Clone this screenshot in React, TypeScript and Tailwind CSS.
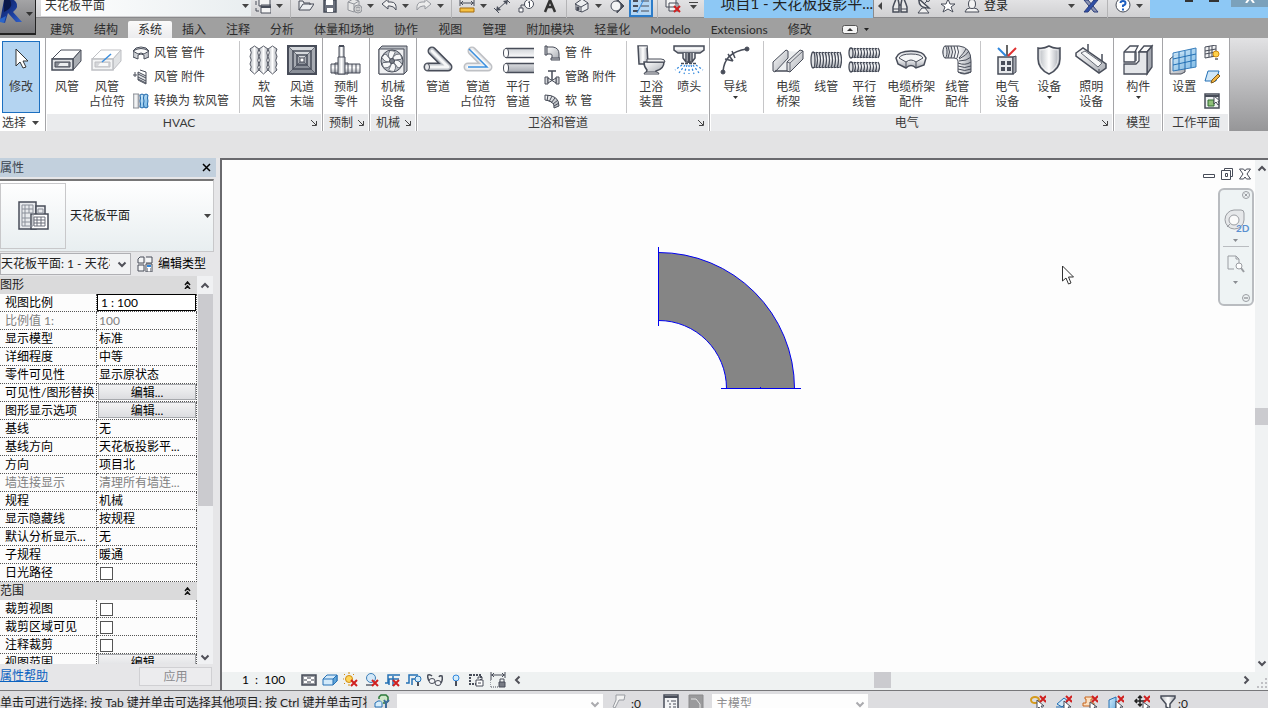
import { useState } from 'react'
import type { ReactNode } from 'react'

const INK = '#484d59'

interface IconProps {
  size?: number
  children: ReactNode
  className?: string
}

function Icon({ size = 16, children, className = '' }: IconProps) {
  return (
    <svg
      width={size}
      height={size}
      viewBox={`0 0 ${size} ${size}`}
      fill="none"
      stroke={INK}
      className={`shrink-0 ${className}`}
      aria-hidden="true"
    >
      {children}
    </svg>
  )
}

// Shared gradients, referenced by id from every icon
function Gradients() {
  return (
    <svg width="0" height="0" className="absolute" aria-hidden="true">
      <defs>
        <linearGradient id="steel" x1="0" y1="0" x2="1" y2="1">
          <stop offset="0" stopColor="#ffffff" />
          <stop offset="1" stopColor="#a9adb4" />
        </linearGradient>
        <linearGradient id="steelH" x1="0" y1="0" x2="1" y2="0">
          <stop offset="0" stopColor="#b4b8be" />
          <stop offset="0.5" stopColor="#ffffff" />
          <stop offset="1" stopColor="#a4a8b0" />
        </linearGradient>
        <linearGradient id="steelV" x1="0" y1="0" x2="0" y2="1">
          <stop offset="0" stopColor="#d0d3d8" />
          <stop offset="0.4" stopColor="#ffffff" />
          <stop offset="1" stopColor="#a4a8b0" />
        </linearGradient>
        <linearGradient id="glass" x1="0" y1="0" x2="1" y2="1">
          <stop offset="0" stopColor="#d6edfb" />
          <stop offset="1" stopColor="#6fb2e2" />
        </linearGradient>
        <linearGradient id="navy" x1="0" y1="0" x2="1" y2="1">
          <stop offset="0" stopColor="#0c1c5c" />
          <stop offset="0.6" stopColor="#1c3f9e" />
          <stop offset="1" stopColor="#2f62cf" />
        </linearGradient>
      </defs>
    </svg>
  )
}

function Arrow({ className = '' }: { className?: string }) {
  return (
    <svg width="7" height="4" viewBox="0 0 7 4" fill="#444" className={`shrink-0 ${className}`} aria-hidden="true">
      <path d="M0 0h7L3.5 4z" />
    </svg>
  )
}

function Chevron({ dir, color = '#505058' }: { dir: 'up' | 'down' | 'left' | 'right'; color?: string }) {
  const d = {
    up: 'M1.5 6.5 5 3l3.5 3.5',
    down: 'M1.5 3.5 5 7l3.5-3.5',
    left: 'M6.5 1.5 3 5l3.5 3.5',
    right: 'M3.5 1.5 7 5 3.5 8.5',
  }[dir]
  return (
    <svg width="10" height="10" viewBox="0 0 10 10" fill="none" stroke={color} strokeWidth="2" className="shrink-0" aria-hidden="true">
      <path d={d} />
    </svg>
  )
}

// A tube is a dark stroke with a lighter one on top
function Tube({ d, w }: { d: string; w: number }) {
  return (
    <g strokeLinecap="round" strokeLinejoin="round">
      <path d={d} strokeWidth={w} />
      <path d={d} stroke="#bfc3c9" strokeWidth={w - 3} />
      <path d={d} stroke="#f6f7f8" strokeWidth={w / 3} />
    </g>
  )
}

function Coil({ x, y, h, n }: { x: number; y: number; h: number; n: number }) {
  return (
    <g>
      <rect x={x} y={y} width={n * 3} height={h} rx="2" fill="url(#steelV)" stroke="none" />
      {Array.from({ length: n }, (_, i) => (
        <path
          key={i}
          d={`M${x + 2 + i * 3} ${y}q3 ${h / 2} 0 ${h}`}
          strokeWidth="1.3"
        />
      ))}
      <ellipse cx={x + 2} cy={y + h / 2} rx="2" ry={h / 2} fill="#dfe1e4" strokeWidth="1.3" />
      <path d={`M${x + 2} ${y + 0.5}h${n * 3 - 3}M${x + 2} ${y + h - 0.5}h${n * 3 - 3}`} strokeDasharray="2 1" />
    </g>
  )
}

function RedX({ x = 8, y = 8 }: { x?: number; y?: number }) {
  return <path d={`M${x} ${y}l6 6m0-6-6 6`} stroke="#d02020" strokeWidth="2" />
}

/* ---------- 32px ribbon icons ---------- */

const ductShape = (
  <>
    <path d="M1 15 10 6h20l-8 9z" fill="#fdfdfd" />
    <path d="m22 15 8-9v11l-8 9z" fill="#a9adb3" />
    <path d="M1 15h21v11H1z" fill="#dfe1e4" strokeWidth="1.5" />
    <path d="M4 18h15v5H4z" fill="#8a8e96" />
    <path d="m7 22 2-3h8v3z" fill="#eceef0" stroke="none" />
  </>
)

const pipeShape = 'M10 7 26 23H6'

const big: Record<string, ReactNode> = {
  cursor: <path d="M11 5v17l4-4 3 6 3-1-3-6h5z" fill="#fff" stroke="#333" />,
  duct: ductShape,
  ductGhost: (
    <>
      <g opacity="0.35">{ductShape}</g>
      <path d="m11 18 9-8" stroke="#3b8ede" strokeWidth="1.5" />
    </>
  ),
  flexDuct: (
    <>
      {[2, 11, 20].map((x) => (
        <path
          key={x}
          d={`M${x} 5l4.500-3 4.500 3q-2.500 4 0 7.500-2.500 4 0 7.500-2.500 4 0 6l-4.500 4-4.500-4q2.500-3 0-6 2.500-4 0-7.500 2.500-4 0-7.500z`}
          fill="url(#steelH)"
          strokeWidth="0.900"
        />
      ))}
    </>
  ),
  terminal: (
    <>
      <path d="M2 2h28v28H2z" fill="#a7abb2" />
      <path d="M2 2 16 16 30 2z" fill="#d5d8dc" stroke="none" />
      <path d="M2 30 16 16 30 30z" fill="#8a8f98" stroke="none" />
      <path d="M2 2h28v28H2z" strokeWidth="2" />
      <path d="M7 7h18v18H7zM11 11h10v10H11z" strokeWidth="1.500" />
      <path d="m2 2 28 28M30 2 2 30" strokeWidth="0.700" />
      <path d="M14 14h4v4h-4z" fill="#fff" />
    </>
  ),
  fabrication: (
    <>
      <path d="M1 20h29v9H1z" fill="url(#steelV)" />
      <path d="M9 2h5v12H9z" fill="url(#steelH)" />
      <path d="M5 19h13v11H5zM22 20v9M26 20v9" fill="none" />
      <path d="M8 13h7v17H8z" fill="url(#steelH)" />
      <path d="M9 2h5" strokeWidth="2" />
    </>
  ),
  fan: (
    <>
      <path d="m2 5 3-3h25v25l-3 3H2z" fill="#b8bcc2" />
      <path d="M2 5h25v25H2z" fill="#eff0f2" />
      <circle cx="15" cy="17" r="11" fill="#b9bdc4" />
      {[0, 60, 120, 180, 240, 300].map((a) => (
        <path key={a} d="M15 16q-6-3-2-9.500 5 0 5 2-2 4-3 7.500z" fill="#f6f7f8" transform={`rotate(${a} 15 17)`} strokeWidth="0.700" />
      ))}
      <circle cx="15" cy="17" r="2.500" fill="#777c86" />
    </>
  ),
  pipe: (
    <>
      <Tube d={pipeShape} w={9} />
      <ellipse cx="5" cy="23" rx="2.500" ry="3.500" fill="#e9eaec" />
    </>
  ),
  pipeGhost: (
    <>
      <g opacity="0.350">
        <Tube d={pipeShape} w={9} />
      </g>
      <path d="M7 5 25 23H6" stroke="#3b8ede" strokeWidth="1.500" />
    </>
  ),
  parallelPipe: (
    <>
      <path d="M4 4.500h28v9H4q-3-4.500 0-9zM4 19.500h28v9H4q-3-4.500 0-9z" fill="url(#steelV)" stroke="none" />
      <path d="M4 4.500h28M4 13.500h28M4 19.500h28M4 28.500h28" strokeWidth="1.500" />
      <ellipse cx="4" cy="9" rx="2.500" ry="4.500" fill="#fff" />
      <ellipse cx="4" cy="24" rx="2.500" ry="4.500" fill="#fff" />
    </>
  ),
  toilet: (
    <>
      <path d="M3 2h9l1 18H4z" fill="url(#steelH)" strokeWidth="1.500" />
      <path d="M4 3h8" stroke="#fff" />
      <path d="M9 18h20q0 7-8 9v2H11l1-3q-3-3-3-8z" fill="url(#steel)" strokeWidth="1.500" />
      <path d="M12 15h14q4 0 4 3H12z" fill="#f4f4f5" />
      <path d="M9 30h15q0-2-3-2h-9q-3 0-3 2z" fill="#f4f4f5" />
    </>
  ),
  sprinkler: (
    <>
      <path d="M1 2h30v4l-4 3H5L1 6z" fill="url(#steelV)" strokeWidth="1.500" />
      <path d="M10 9v5l3 4h6l3-4V9M13 9v8m6-8v8" fill="#e9ebed" strokeWidth="1.500" />
      <path d="M16 9v10" strokeWidth="3" />
      <path d="M8 19.500h16" strokeWidth="1.500" strokeDasharray="3 1" />
      <path
        d="m9 21-7 5m10-5-6 8m8-8-3 9m5-9v9m2-9 3 9m-1-9 6 8m-3-8 7 5"
        stroke="#2f86dd"
        strokeWidth="1.200"
        strokeDasharray="2 2"
      />
    </>
  ),
  wire: (
    <>
      <path d="M4 28Q5 8 28 5" strokeWidth="1.500" />
      <path d="m6 15 8 2M9 10l5 7M13 7l3 7" strokeWidth="1.500" />
      <circle cx="4" cy="28" r="2" fill={INK} />
      <circle cx="28" cy="5" r="2" fill={INK} />
    </>
  ),
  cableTray: (
    <>
      <path d="m3 27 12-20 14 1-12 19z" fill="#eceef0" stroke="none" />
      <path d="m1 18 13-12 2 1v7L3 28l-2-1z" fill="url(#steel)" />
      <path d="M3 27h13" strokeWidth="1.500" />
      <path d="m15 18 13-12 3 1v8L18 28l-3-1z" fill="url(#steel)" />
      <path d="m18 19 13-12M18 19v9m0-9-3-1" strokeWidth="0.800" />
    </>
  ),
  conduit: <Coil x={1} y={8} h={16} n={10} />,
  parallelConduit: (
    <>
      <Coil x={1} y={4} h={10} n={10} />
      <Coil x={1} y={18} h={10} n={10} />
    </>
  ),
  trayFitting: (
    <>
      <path d="M1 14q2-7 15-7t15 7l-2 7-8 3q-5-5-10 0l-8-4z" fill="url(#steelV)" strokeWidth="1.500" />
      <path d="M4 14q2-4 12-4t12 4l-7 4q-5-4-10 0z" fill="#f5f6f7" />
      <path d="M11 18v6m10-6v6" />
    </>
  ),
  conduitFitting: (
    <>
      <path d="M4 2h14q12 1 12 15v11q-7 4-13 0V17q0-3-4-3H4Q0 8 4 2z" fill="url(#steelH)" />
      {[0, 1, 2, 3, 4].map((i) => (
        <path key={i} d={`M${4 + i * 3} 2q3 6 0 12`} />
      ))}
      <ellipse cx="4" cy="8" rx="2" ry="6" fill="#e4e6e9" />
      <path d="M18 14q5-5 7-9M18 15q8-4 10-8M18 17q8 0 12-4M17 19q7 3 13-1M17 22q7 3 13 0M17 25q7 3 13 0M17 28q7 3 13 0" />
    </>
  ),
  elecPanel: (
    <>
      <path d="M7 13h15v17H7z" fill="#e6e8eb" strokeWidth="1.500" />
      <path d="m22 13 3-1v16l-3 2z" fill="#a4a8b0" />
      <path d="M10 17h4v4h-4zM16 17h4v4h-4zM10 23h4v4h-4zM16 23h4v4h-4z" fill={INK} stroke="none" />
      <path d="M16 12V1" strokeWidth="1.500" stroke="#333" />
      <path d="M15 12 7 4" strokeWidth="2" stroke="#2f86dd" />
      <path d="m17 12 8-8" strokeWidth="2" stroke="#e03030" />
    </>
  ),
  shield: (
    <>
      <path d="M5 4q6 1 11-2 5 3 11 2v11q0 10-11 15Q5 25 5 15z" fill="url(#steelH)" strokeWidth="1.500" />
      <path d="M7 6q5 0 9-2 4 2 9 2v9q0 8-9 13-9-5-9-13z" stroke="#fff" opacity="0.600" />
    </>
  ),
  light: (
    <>
      <path d="M13 0v8M27 10v8" strokeWidth="1.500" />
      <path d="m1 9 7-5 23 16v4l-7 5L1 12z" fill="url(#steel)" strokeWidth="1.500" />
      <path d="m6 9 4-2 17 12-4 4z" fill="#f6f7f8" strokeWidth="0.800" />
      <path d="M24 25v4" />
    </>
  ),
  component: (
    <>
      <path d="m2 8 6-6h8l-3 6v10H2z" fill="#fbfbfb" strokeWidth="1.300" />
      <path d="m17 8 5-6h8l-5 6z" fill="#fbfbfb" strokeWidth="1.300" />
      <path d="M25 8l5-6v21l-5 7z" fill="#a4a8b0" strokeWidth="1.300" />
      <path d="M2 20h12l3-3V8h8v22H2z" fill="#e4e6e9" strokeWidth="1.300" />
      <path d="M2 8h12v9" strokeWidth="1.300" />
    </>
  ),
  workPlane: (
    <>
      <path d="m2 15 5-4h10v17l-4 2H2z" fill="url(#steel)" />
      <path d="m5 9 23-5v19L5 27z" fill="url(#glass)" stroke="#2471b5" opacity="0.900" />
      <path d="M11 8v18M17 7v18M23 5v19M5 15l23-5M5 21l23-5" stroke="#2471b5" />
    </>
  ),
}

/* ---------- 16px icons ---------- */

const small: Record<string, ReactNode> = {
  ductFitting: (
    <>
      <path d="M0 6q2-4 8-4t8 4v6l-5 2v-4q-3-2-6 0v4l-5-2z" fill="url(#steelH)" />
      <path d="M0 6q8-5 16 0l-5 3q-3-2-6 0z" fill="#fafafa" />
    </>
  ),
  ductAccessory: (
    <>
      <path d="m5 3 8 4v8l-8-4z" fill="#e1e3e6" />
      <path d="m5 5 8 4M5 8l8 4M5 10l8 4M2 3v5M0 6h4M7 1l6 2v4" />
    </>
  ),
  convertFlex: (
    <>
      <path d="M0 1h6v14H0z" fill="url(#steelH)" stroke="#8a8e96" />
      <path d="M7 2q2-2 4 0 2-2 4 0-1 3 0 6-1 3 0 6-2 2-4 0-2 2-4 0 1-3 0-6 1-3 0-6z" fill="url(#glass)" stroke="#1f68ab" />
      <path d="M11 2q-1 3 0 6-1 3 0 6" stroke="#1f68ab" />
    </>
  ),
  pipeFitting: (
    <>
      <path d="M2 2h7q6 1 6 7v5H8v-4q0-1-2-1H2z" fill="url(#steel)" />
      <path d="M1 1h2v9H1zM7 13h9v2H7z" fill="#c8cbd0" />
    </>
  ),
  pipeAccessory: (
    <>
      <path d="M1 8h3v7H1zM12 8h3v7h-3z" fill="#d2d4d8" />
      <path d="m4 9 8 5V9l-8 5z" fill="#e9ebed" />
      <path d="M8 11V2M4 2h8" strokeWidth="1.500" />
    </>
  ),
  flexPipe: (
    <>
      <path d="M1 2q14 0 14 11l-5 2q1-7-9-8z" fill="url(#steel)" />
      <path d="M4 2 3 8M8 3 5 9m6-4-4 5m7-3-5 4m6-1-5 3" />
    </>
  ),
  planeShow: (
    <>
      <path d="m1 2 11-2v11L1 13zM5 1v11M8 1v11M1 6l11-2M1 9l11-2" fill="#f1f2f3" />
      <circle cx="12" cy="9" r="3" fill="#ffd24a" stroke="#d08a10" />
      <path d="M11 13h3v2h-3z" fill="#888" stroke="none" />
    </>
  ),
  refPlane: (
    <>
      <path d="M4 2h11l-3 10H1z" fill="#cfe6f7" stroke="#2471b5" />
      <path d="m7 14 1-3 6-6 2 2-6 6z" fill="#f2b544" stroke="#7c5a1c" />
    </>
  ),
  planeViewer: (
    <>
      <path d="M1 1h14v14H1z" fill="#eef0f2" strokeWidth="1.500" />
      <path d="M1 3h14" strokeWidth="2" />
      <path d="M4 7h6v6H4z" fill="#8fbf78" stroke="#2f6c2f" />
      <path d="M10 3v8l2-2 2 3 1-1-1-3h2z" fill="#fff" />
    </>
  ),
  switchWin: (
    <>
      <path d="M4 0h11v8H4zM6 7h10v8H6z" fill="#f4f4f4" />
      <path d="M6 9h10" strokeWidth="2" />
      <path d="M1 3v4m0 3v3h3" />
    </>
  ),
  open: <path d="M1 12V3h4l1 2h6v2M1 12l4-6h11l-4 6z" fill="#eceef0" />,
  save: (
    <>
      <path d="M2 2h12v12H2z" fill="#6b707c" strokeWidth="1.500" />
      <path d="M4 2h7v5H4zM5 10h6v4H5z" fill="#fff" stroke="none" />
    </>
  ),
  sync: (
    <g stroke="#92959b">
      <path d="m2 4 5-3 6 2v8l-5 3-6-2z" fill="#e6e6e6" />
      <path d="m2 4 6 2 5-3M8 6v8" />
      <circle cx="12" cy="11" r="4" fill="#cfcfcf" />
      <path d="M10 10q2-2 4 0m0 2q-2 2-4 0" />
    </g>
  ),
  undo: <path d="M1 6 7 1v3h3q6 0 5 8-2-4-6-4H7v3z" fill="#f0f0f0" />,
  redo: <path d="M15 6 9 1v3H6q-6 0-5 8 2-4 6-4h2v3z" fill="#ececec" stroke="#96999f" />,
  measure: (
    <>
      <path d="M1 5h14M1 2v6M15 2v6M4 3 2 5l2 2m8-4 2 2-2 2" />
      <path d="M1 10h14v4H1z" fill="#f5c042" stroke="#a46d10" />
    </>
  ),
  dimension: (
    <>
      <path d="M3 12 13 3M0 10l5 5M11 0l5 5" />
      <path d="m2 13 1-5 4 4zM14 2l-1 5-4-4z" fill={INK} stroke="none" />
    </>
  ),
  tag: (
    <>
      <circle cx="11" cy="6" r="4.500" fill="#fff" />
      <path d="M10 4.500 11.500 3.500V9M7 7H3v4" />
      <path d="M1 10h4v4H1z" fill="#fff" />
    </>
  ),
  textA: <path d="M3 14 8 2l5 12M5 9h6" stroke="#333" strokeWidth="2.500" />,
  house: (
    <>
      <path d="M2 6v6l6 2 6-3V5L8 1 1 6l6 3 7-4M7 9v5" fill="#eceef0" />
      <path d="M3 9h2v3H3z" fill={INK} />
    </>
  ),
  section: (
    <>
      <path d="M8 1v14l7-7z" fill={INK} />
      <circle cx="7" cy="8" r="5" fill="#f4f4f4" />
    </>
  ),
  thinLines: (
    <>
      <path d="M0 3h5M0 8h5M0 13h5" strokeWidth="2" />
      <path d="M8 3h8M8 8h8M8 13h8" />
      <path d="m4 15 7-14" stroke="#2f86dd" />
    </>
  ),
  closeHidden: (
    <>
      <path d="M1 1h10v8H1zM4 5h9v8H4z" fill="#f4f4f4" />
      <RedX x={9} y={8} />
    </>
  ),
  binoculars: (
    <>
      <path d="M2 6 4 1h2l1 5v8H1V9zM14 6l-2-5h-2L9 6v8h6V9zM7 7h2" fill="#e8e8e8" strokeWidth="1.500" />
      <path d="M1 11h6m2 0h6" />
    </>
  ),
  satellite: (
    <>
      <path d="M3 1q-1 9 10 9z" fill="#f0f0f0" strokeWidth="1.500" />
      <path d="m8 6 4-4M2 15h11l-4-5H6z" fill="#f0f0f0" />
      <circle cx="12" cy="2" r="1.500" fill="#f0f0f0" />
    </>
  ),
  star: <path d="m8 1 2 5h5l-4 3 2 5-5-3-5 3 2-5-4-3h5z" fill="#fff" />,
  person: (
    <>
      <path d="M1 14q1-4 5-4h4q4 0 5 4z" fill="#f4f4f4" />
      <ellipse cx="8" cy="6" rx="3.500" ry="4.500" fill="#f4f4f4" />
    </>
  ),
  exchange: (
    <>
      <path d="M1 2h4l10 12h-4z" fill="#8b93b0" stroke="#2b3c7c" />
      <path d="M15 2h-4L1 14h4z" fill="#2e4fa8" stroke="#2b3c7c" />
    </>
  ),
  help: (
    <>
      <circle cx="8" cy="7" r="7" fill="#fff" />
      <path d="M5.500 5q0-2 2.500-2t2.500 2T8 7.500V9M8 10.500v2" stroke="#1f5fc0" strokeWidth="2" />
    </>
  ),
  editType: (
    <>
      <path d="m1 3 2-2h4v6H1zM9 1h6v6H9M1 9h6v6H1z" fill="#f4f5f6" />
      <path d="M9 8h6v8H9z" fill="#fff" />
      <path d="M10 9h4v2h-4z" fill="#2f86dd" stroke="none" />
      <path d="M10 13h1m2 0h1m-4 2h1m2 0h1" />
    </>
  ),
  detail: (
    <>
      <path d="M1 3h14v10H1z" fill="#9a9da3" strokeWidth="1.500" />
      <path d="M3 5h3v2H3zM10 5h3v2h-3zM6 7h4v2H6zM3 9h3v2H3zM10 9h3v2h-3z" fill="#fff" stroke="none" />
    </>
  ),
  visualStyle: (
    <>
      <path d="m1 7 4-4h10v6l-4 4H1z" fill="#d3eafa" stroke="#2471b5" />
      <path d="m11 7 4-4v6l-4 4z" fill="#5fa4d8" stroke="#2471b5" />
      <path d="M1 7h10" stroke="#2471b5" />
    </>
  ),
  sunPath: (
    <>
      <circle cx="6" cy="7" r="3.500" fill="#ffd65a" stroke="#cf8a10" />
      <path d="M6 0v2M6 12v2M0 7h1M1 2l1 1m8 0 1-1M1 12l1-1" stroke="#cf8a10" />
      <RedX />
    </>
  ),
  shadow: (
    <>
      <circle cx="7" cy="6" r="4.500" fill="#d3e8f8" stroke="#3d7fb8" />
      <path d="M2 13h7" strokeWidth="2" stroke="#7f868f" />
      <RedX />
    </>
  ),
  crop: (
    <>
      <path d="M0 11h3V3h12M4 13V7h10M8 4v10" stroke="#2471b5" strokeWidth="1.500" />
      <RedX />
    </>
  ),
  cropShow: (
    <>
      <path d="M0 11h3V3h9M6 13V7h4" stroke="#2471b5" strokeWidth="1.500" />
      <circle cx="12" cy="7" r="3" fill="#d3ecfb" stroke="#2471b5" />
      <path d="M12 10v4" strokeWidth="2" />
    </>
  ),
  glasses: (
    <>
      <ellipse cx="5" cy="9" rx="3" ry="2.500" fill="#f4f6f8" />
      <ellipse cx="11" cy="11" rx="3" ry="2.500" fill="#f4f6f8" />
      <path d="M2 9Q0 5 1 3q2-1 4 1M14 11q2-3 1-7-2-1-3 1" strokeWidth="1.500" />
    </>
  ),
  bulb: (
    <>
      <circle cx="8" cy="6" r="3" fill="#d3ecfb" stroke="#2f86dd" />
      <path d="M8 9v5" strokeWidth="2" />
    </>
  ),
  tempView: (
    <>
      <path d="M1 3h11v9H1z" strokeWidth="2" strokeDasharray="2 1" />
      <path d="M7 8h7v6H7z" fill="#fff" />
      <path d="M9 7V5h4v2m-4 4h3" />
    </>
  ),
  constraints: (
    <>
      <path d="M1 0v8M15 0v6M1 3h14M4 1 2 3l2 2m8-4 2 2-2 2" />
      <path d="M0 8v7h9" strokeDasharray="1 1" />
      <path d="M9 10h6v5H9z" fill="#777b84" />
      <path d="M10 10V7h4v3" />
    </>
  ),
  worksets: (
    <>
      <path d="m1 9 3-2h4v6H1z" fill="#d6ecfa" stroke="#2471b5" />
      <path d="M5 5V3l2-2h5l2 2v4l-2 2H9" fill="#cfe7c8" stroke="#2c7a3a" strokeWidth="1.500" />
      <path d="M12 8v7m-2-9 2 3 3-3" stroke="#3c6c9c" strokeWidth="2" />
    </>
  ),
  pushPin: <path d="M5 1h9l-1 5H8l-4 8-2-1 3-7z" fill="#f2f2f2" stroke="#999ca2" />,
  optionList: (
    <>
      <path d="M1 1h14v14H1z" fill="#f2f3f5" strokeWidth="1.500" />
      <path d="M1 3h14" strokeWidth="2" />
      <path d="M4 7h2m2 0h5M6 10h2m2 0h3M6 13h2m2 0h3" />
    </>
  ),
  excludeOption: (
    <>
      <path d="M1 1h14v14H1z" fill="#9a9a9c" stroke="#8a8a8c" />
      <path d="M3 5h5l4 5v4" stroke="#e5e5e5" />
    </>
  ),
  selLinks: (
    <>
      <ellipse cx="5" cy="5" rx="4" ry="3" stroke="#d59a1c" strokeWidth="2" />
      <path d="M7 5v9l2-2 2 3 2-1-2-3h3z" fill="#fff" />
      <RedX x={10} y={1} />
    </>
  ),
  selUnderlay: (
    <>
      <path d="m1 9 7-6 4 3-6 6zM0 12h9" fill="#cfe6f7" stroke="#2471b5" />
      <path d="M8 6v9l2-2 2 3 2-1-2-3h3z" fill="#fff" />
      <RedX x={10} y={1} />
    </>
  ),
  selPinned: (
    <>
      <path d="M3 2h8v2H9v4h3v3H1V8h3V4H3z" fill="#fbe0c2" stroke="#c8641c" />
      <path d="M8 7v8l2-2 2 3 2-1-2-3h3z" fill="#fff" />
      <RedX x={10} y={1} />
    </>
  ),
  selFace: (
    <>
      <path d="m1 5 7-3v11l-7 2z" fill="url(#glass)" stroke="#2471b5" />
      <path d="M8 6v9l2-2 2 3 2-1-2-3h3z" fill="#fff" />
      <RedX x={10} y={1} />
    </>
  ),
  dragSel: (
    <>
      <path d="M6 1v10M1 6h10M4 3l2-2 2 2M4 9l2 2 2-2M3 4 1 6l2 2" stroke="#222" strokeWidth="1.500" />
      <path d="M9 7v8l2-2 2 3 1-1-1-3h3z" fill="#fff" />
      <RedX x={10} y={1} />
    </>
  ),
  filter: <path d="M1 2h14v2l-5 6v5l-4-2v-3L1 4z" fill="url(#steelH)" strokeWidth="1.500" />,
}

/* ---------- Title bar ---------- */

function QatButton({ name, label }: { name: string; label: string }) {
  return (
    <button type="button" aria-label={label} className="mx-1 shrink-0">
      <Icon>{small[name]}</Icon>
    </button>
  )
}

function QatArrow() {
  return <Arrow className="mr-[3px] ml-px" />
}

function QatSeparator() {
  return <span className="mr-[3px] ml-1 h-6 w-px shrink-0 bg-[#b4b4b6]" />
}

function TitleBar() {
  return (
    <div className="flex h-[18px] overflow-hidden bg-[#8dc8f5]">
      <div className="flex shrink-0 items-center border-b border-[#8a8a8c] bg-gradient-to-b from-[#e2e2e4] to-[#d0d0d2] pr-1.5 pb-[6px] pl-[5px]">
        <div className="relative flex h-5 w-[210px] items-center bg-gradient-to-r from-white to-[#e9eef0]">
          <select aria-label="当前视图" className="h-5 w-full appearance-none px-1 text-[12px] leading-5 text-[#333]">
            <option>天花板平面</option>
          </select>
          <Arrow className="pointer-events-none absolute right-0.5" />
        </div>
        <QatButton name="switchWin" label="切换窗口" />
        <QatArrow />
        <QatSeparator />
        <QatButton name="open" label="打开" />
        <QatButton name="save" label="保存" />
        <QatButton name="sync" label="同步" />
        <QatArrow />
        <QatButton name="undo" label="放弃" />
        <QatArrow />
        <QatButton name="redo" label="重做" />
        <QatArrow />
        <QatSeparator />
        <QatButton name="measure" label="测量" />
        <QatArrow />
        <QatButton name="dimension" label="对齐尺寸标注" />
        <QatButton name="tag" label="按类别标记" />
        <QatButton name="textA" label="文字" />
        <QatSeparator />
        <QatButton name="house" label="默认三维视图" />
        <QatArrow />
        <QatButton name="section" label="剖面" />
        <button
          type="button"
          aria-label="细线"
          aria-pressed="true"
          className="flex h-[22px] w-6 shrink-0 items-center justify-center border-2 border-[#2c7cc9] bg-[#b4d6f3]"
        >
          <Icon>{small.thinLines}</Icon>
        </button>
        <QatSeparator />
        <QatButton name="closeHidden" label="关闭隐藏窗口" />
        <button type="button" aria-label="自定义快速访问工具栏" className="ml-1">
          <svg width="9" height="7" viewBox="0 0 9 7" fill="#444" aria-hidden="true">
            <path d="M0 0h9v1H0zM1 3h7L4.500 7z" />
          </svg>
        </button>
      </div>

      <div className="flex min-w-0 flex-1 items-center justify-end pb-3">
        <h1 className="truncate text-[15px] leading-5 text-[#222]">项目1 - 天花板投影平...</h1>
      </div>

      {/* Info center */}
      <div className="flex shrink-0 items-center border-b border-l border-[#8a8a8c] bg-gradient-to-b from-[#e2e2e4] to-[#d0d0d2] pr-1 pb-[6px] pl-1">
        <svg width="4" height="8" viewBox="0 0 4 8" fill="#444" className="mr-1.5" aria-hidden="true">
          <path d="M4 0v8L0 4z" />
        </svg>
        <QatButton name="binoculars" label="搜索" />
        <QatButton name="satellite" label="通讯中心" />
        <QatButton name="star" label="收藏夹" />
        <button type="button" className="ml-1 flex items-center gap-1 text-[12px] leading-4 text-[#222]">
          <Icon>{small.person}</Icon>
          登录
        </button>
        <Arrow className="mr-1 ml-[60px]" />
        <QatButton name="exchange" label="应用程序" />
        <QatSeparator />
        <QatButton name="help" label="帮助" />
        <QatArrow />
      </div>

      {/* Window buttons */}
      <div className="flex w-[118px] shrink-0 justify-end">
        <button type="button" aria-label="最小化" className="mr-4 h-[2px] w-2 bg-[#333]" />
        <button type="button" aria-label="还原" className="mr-3 h-[2px] w-2.5 bg-[#333]" />
        <button type="button" aria-label="关闭" className="flex h-[7px] w-[37px] justify-center bg-[#7ba1bb]">
          <svg width="10" height="3" viewBox="0 0 10 3" stroke="#fff" strokeWidth="2" aria-hidden="true">
            <path d="m1 3 3-4m2 0 3 4" />
          </svg>
        </button>
      </div>
    </div>
  )
}

const tabs = [
  '建筑', '结构', '系统', '插入', '注释', '分析', '体量和场地', '协作', '视图', '管理',
  '附加模块', '轻量化', 'Modelo', 'Extensions', '修改',
]

function Header() {
  const [active, setActive] = useState('系统')
  return (
    <header className="flex bg-[#a0a0a0]">
      <button
        type="button"
        aria-label="应用程序菜单"
        className="flex h-[35px] w-9 shrink-0 border-r border-b-2 border-[#222] bg-gradient-to-b from-[#a4a4a6] to-[#77777a]"
      >
        <svg width="35" height="33" viewBox="0 0 35 33" aria-hidden="true">
          <path d="M4 0h10q5 4 2 9l-3 3 9 10h-6L8 13 5 23l-5-2z" fill="url(#navy)" />
          <path d="M4 0h6q3 5-1 9l-5 3z" fill="#0b184a" />
          <path d="m0 19 6-3-2 7-4-1z" fill="#2b66c9" />
          <path d="M26 12h7l-3.500 4z" fill="#333" />
        </svg>
      </button>
      <div className="flex min-w-0 flex-1 flex-col">
        <TitleBar />
        <nav className="flex h-5 items-end pl-1 text-[12px] text-[#2c2c2c]">
          {tabs.map((tab) => (
            <button
              key={tab}
              type="button"
              onClick={() => setActive(tab)}
              className={`h-[17px] px-2.5 leading-[17px] whitespace-nowrap ${
                active === tab ? 'rounded-t-xs bg-gradient-to-b from-[#fafafa] to-[#ececee]' : ''
              }`}
            >
              {tab}
            </button>
          ))}
          <button type="button" aria-label="最小化功能区" className="ml-5 flex h-[17px] items-center gap-1.5">
            <svg width="16" height="9" viewBox="0 0 16 9" aria-hidden="true">
              <rect x="0.500" y="0.500" width="15" height="8" rx="2" fill="#f4f4f4" stroke="#555" />
              <path d="M5 6h6L8 3z" fill="#333" />
            </svg>
            <svg width="5" height="3" viewBox="0 0 5 3" fill="#222" aria-hidden="true">
              <path d="M0 0h5L2.500 3z" />
            </svg>
          </button>
        </nav>
      </div>
    </header>
  )
}

/* ---------- Ribbon ---------- */

interface ToolProps {
  icon: string
  label: string
  width?: string
  menu?: boolean
}

function Tool({ icon, label, width = 'w-[38px]', menu = false }: ToolProps) {
  return (
    <button type="button" className={`flex shrink-0 flex-col items-center pt-1.5 ${width}`}>
      <Icon size={32}>{big[icon]}</Icon>
      <span className="mt-[3px] text-center leading-[15px] whitespace-pre">{label}</span>
      {menu && (
        <svg width="5" height="3" viewBox="0 0 5 3" fill="#333" className="mt-0.5" aria-hidden="true">
          <path d="M0 0h5L2.500 3z" />
        </svg>
      )}
    </button>
  )
}

function ToolList({ items }: { items: [string, string][] }) {
  return (
    <div className="flex shrink-0 flex-col pt-[3px] pr-2.5 pl-1.5">
      {items.map(([icon, label]) => (
        <button key={label} type="button" className="flex h-6 items-center gap-[5px] whitespace-nowrap">
          <Icon>{small[icon]}</Icon>
          {label}
        </button>
      ))}
    </div>
  )
}

function Divider() {
  return <span className="mx-[5px] mt-[3px] h-[72px] w-px shrink-0 bg-[#c6c6c8]" />
}

interface PanelProps {
  title: string
  launcher?: boolean
  children: ReactNode
}

function Panel({ title, launcher = false, children }: PanelProps) {
  return (
    <section className="flex shrink-0 flex-col border-r border-[#a5a5a8] bg-white px-px">
      <div className="flex h-[76px]">{children}</div>
      <div className="flex h-[17px] items-center bg-[#eaebed]">
        <h2 className="flex-1 text-center leading-4">{title}</h2>
        {launcher && (
          <button type="button" aria-label={`${title}设置`} className="mr-1">
            <svg width="6" height="6" viewBox="0 0 6 6" fill="none" stroke="#444" aria-hidden="true">
              <path d="m0 0 5 5M5.500 1v4.500H1" />
            </svg>
          </button>
        )}
      </div>
    </section>
  )
}

function Ribbon() {
  return (
    <div className="flex h-[93px] shrink-0 overflow-hidden bg-gradient-to-b from-[#e2e2e4] to-[#969698] text-[12px] text-[#3a3a3a]">
      <section className="flex shrink-0 flex-col border-r border-[#a5a5a8] bg-white pr-[5px] pl-0.5">
        <div className="flex h-[76px] pt-[3px]">
          <button
            type="button"
            className="flex h-[72px] w-[38px] flex-col items-center border border-[#1c6fc0] bg-[#b4d4f1] pt-0.5"
          >
            <Icon size={32}>{big.cursor}</Icon>
            <span className="mt-[3px] leading-[15px]">修改</span>
          </button>
        </div>
        <button type="button" className="flex h-[17px] items-center gap-1.5 leading-4">
          选择 <Arrow />
        </button>
      </section>

      <Panel title="HVAC" launcher>
        <Tool icon="duct" label="风管" width="w-10" />
        <Tool icon="ductGhost" label={'风管\n占位符'} width="w-10" />
        <ToolList
          items={[
            ['ductFitting', '风管 管件'],
            ['ductAccessory', '风管 附件'],
            ['convertFlex', '转换为 软风管'],
          ]}
        />
        <span className="mt-[3px] mr-[5px] h-[72px] w-px shrink-0 bg-[#c6c6c8]" />
        <Tool icon="flexDuct" label={'软\n风管'} />
        <Tool icon="terminal" label={'风道\n末端'} />
      </Panel>

      <Panel title="预制" launcher>
        <div className="px-[3px]">
          <Tool icon="fabrication" label={'预制\n零件'} />
        </div>
      </Panel>

      <Panel title="机械" launcher>
        <div className="px-[3px]">
          <Tool icon="fan" label={'机械\n设备'} />
        </div>
      </Panel>

      <Panel title="卫浴和管道" launcher>
        <Tool icon="pipe" label="管道" width="w-10" />
        <Tool icon="pipeGhost" label={'管道\n占位符'} width="w-10" />
        <Tool icon="parallelPipe" label={'平行\n管道'} width="w-10" />
        <ToolList
          items={[
            ['pipeFitting', '管 件'],
            ['pipeAccessory', '管路 附件'],
            ['flexPipe', '软 管'],
          ]}
        />
        <span className="mt-[3px] mr-[5px] h-[72px] w-px shrink-0 bg-[#c6c6c8]" />
        <Tool icon="toilet" label={'卫浴\n装置'} />
        <Tool icon="sprinkler" label="喷头" />
      </Panel>

      <Panel title="电气" launcher>
        <div className="flex pr-1 pl-[5px]">
          <Tool icon="wire" label="导线" menu />
        </div>
        <Divider />
        <Tool icon="cableTray" label={'电缆\n桥架'} />
        <Tool icon="conduit" label="线管" />
        <Tool icon="parallelConduit" label={'平行\n线管'} />
        <Tool icon="trayFitting" label={'电缆桥架\n配件'} width="w-14" />
        <Tool icon="conduitFitting" label={'线管\n配件'} width="w-[36px]" />
        <Divider />
        <Tool icon="elecPanel" label={'电气\n设备'} width="w-[42px]" />
        <Tool icon="shield" label="设备" width="w-[42px]" menu />
        <Tool icon="light" label={'照明\n设备'} width="w-[42px]" />
      </Panel>

      <Panel title="模型">
        <div className="px-1">
          <Tool icon="component" label="构件" menu />
        </div>
      </Panel>

      <Panel title="工作平面">
        <Tool icon="workPlane" label="设置" width="w-10" />
        <div className="flex flex-col gap-2 pt-[7px] pr-2">
          <button type="button" aria-label="显示">
            <Icon>{small.planeShow}</Icon>
          </button>
          <button type="button" aria-label="参照平面">
            <Icon>{small.refPlane}</Icon>
          </button>
          <button type="button" aria-label="查看器">
            <Icon>{small.planeViewer}</Icon>
          </button>
        </div>
      </Panel>
    </div>
  )
}

/* ---------- Properties palette ---------- */

type Kind = 'text' | 'input' | 'button' | 'check' | 'disabled'

interface Prop {
  name: string
  value?: string
  kind?: Kind
}

const groups: { title: string; props: Prop[] }[] = [
  {
    title: '图形',
    props: [
      { name: '视图比例', value: '1 : 100', kind: 'input' },
      { name: '比例值 1:', value: '100', kind: 'disabled' },
      { name: '显示模型', value: '标准' },
      { name: '详细程度', value: '中等' },
      { name: '零件可见性', value: '显示原状态' },
      { name: '可见性/图形替换', value: '编辑...', kind: 'button' },
      { name: '图形显示选项', value: '编辑...', kind: 'button' },
      { name: '基线', value: '无' },
      { name: '基线方向', value: '天花板投影平...' },
      { name: '方向', value: '项目北' },
      { name: '墙连接显示', value: '清理所有墙连...', kind: 'disabled' },
      { name: '规程', value: '机械' },
      { name: '显示隐藏线', value: '按规程' },
      { name: '默认分析显示...', value: '无' },
      { name: '子规程', value: '暖通' },
      { name: '日光路径', kind: 'check' },
    ],
  },
  {
    title: '范围',
    props: [
      { name: '裁剪视图', kind: 'check' },
      { name: '裁剪区域可见', kind: 'check' },
      { name: '注释裁剪', kind: 'check' },
      { name: '视图范围', value: '编辑...', kind: 'button' },
    ],
  },
]

function PropValue({ prop }: { prop: Prop }) {
  switch (prop.kind) {
    case 'input':
      return (
        <input
          id={prop.name}
          defaultValue={prop.value}
          className="block h-[17px] w-full border border-black bg-white px-[3px] leading-[15px] outline-none"
        />
      )
    case 'button':
      return (
        <button
          type="button"
          id={prop.name}
          className="mx-px block h-[16px] w-[98px] border border-[#a6a8ac] bg-gradient-to-b from-[#f3f3f4] to-[#dcdde0] leading-[15px]"
        >
          {prop.value}
        </button>
      )
    case 'check':
      return (
        <input
          type="checkbox"
          id={prop.name}
          className="mt-[3px] ml-[3px] block h-[13px] w-[13px] appearance-none border border-[#555] bg-white checked:bg-[#555]"
        />
      )
    default:
      return <span className="block truncate pl-0.5">{prop.value}</span>
  }
}

function PropertyTable() {
  return (
    <table className="w-full table-fixed border-separate border-spacing-0 text-[12px]">
      <colgroup>
        <col className="w-[97px]" />
        <col />
      </colgroup>
      {groups.map((group) => (
        <tbody key={group.title}>
          <tr>
            <th colSpan={2} className="h-[18px] bg-[#dadadb] p-0 text-left leading-[18px] font-normal">
              <span className="flex items-center justify-between pr-1.5">
                {group.title}
                <svg width="7" height="8" viewBox="0 0 7 8" fill="none" stroke="#111" strokeWidth="1.500" aria-hidden="true">
                  <path d="m1 4 2.500-3L6 4M1 8l2.500-3L6 8" />
                </svg>
              </span>
            </th>
          </tr>
          {group.props.map((prop) => (
            <tr key={prop.name} className={prop.kind === 'disabled' ? 'text-[#808080]' : 'text-black'}>
              <td className="h-[18px] border-r border-b border-dotted border-[#555] p-0 pl-[5px] align-top leading-[17px] whitespace-nowrap">
                <label htmlFor={prop.name}>{prop.name}</label>
              </td>
              <td className="h-[18px] border-r border-b border-dotted border-[#555] p-0 align-top leading-[17px]">
                <PropValue prop={prop} />
              </td>
            </tr>
          ))}
        </tbody>
      ))}
    </table>
  )
}

function PropertiesPalette() {
  return (
    <aside className="mr-1 flex w-[216px] shrink-0 flex-col text-[12px] text-[#222]">
      <div className="mb-[2px] flex h-[19px] shrink-0 items-center justify-between bg-[#c2d0dd] pr-[5px]">
        <h2 className="leading-[18px] text-[#3a4450]">属性</h2>
        <button type="button" aria-label="关闭属性">
          <svg width="9" height="9" viewBox="0 0 9 9" stroke="#000" strokeWidth="1.500" aria-hidden="true">
            <path d="m1 1 7 7m0-7L1 8" />
          </svg>
        </button>
      </div>

      {/* Type selector */}
      <div className="mr-0.5 flex h-[73px] shrink-0 items-center border-t-2 border-r border-b border-t-[#777] border-r-[#c8c8ca] border-b-[#c8c8ca] bg-gradient-to-b from-white to-[#e8eef0] pr-0.5">
        <div className="flex h-[66px] w-[66px] shrink-0 items-center justify-center border border-[#c8c8ca]">
          <Icon size={32}>
            <g strokeWidth="1.500">
              <path d="M2 2h17v27H2z" fill="#e8eaed" />
              <path d="M19 6h9v20h-9z" fill="#e8eaed" />
              <path d="M14 14h17v15H14z" fill="#fff" />
            </g>
            <path d="M5 5h11v21H5zM8 5v21M12 5v8M5 9h11M5 13h11M5 18h8M5 22h8M21 9h5v4h-5z" stroke="#8b909a" />
            <path d="M17 17h11v9H17zM20 17v9M24 17v9M17 20h11M17 23h11" stroke="#6a6f7a" />
          </Icon>
        </div>
        <span className="flex-1 pl-1">天花板平面</span>
        <Arrow />
      </div>

      <div className="mr-0.5 flex h-[24px] shrink-0 items-center">
        <div className="relative flex h-[22px] w-[131px] shrink-0 items-center border border-[#b0b0b4] bg-[#f2f3f4]">
          <select aria-label="图元" className="h-5 w-full appearance-none pr-5 leading-5">
            <option>天花板平面: 1 - 天花板投影平面</option>
          </select>
          <span className="pointer-events-none absolute right-[3px]">
            <Chevron dir="down" />
          </span>
        </div>
        <button type="button" className="ml-1.5 flex items-center gap-[5px] text-black">
          <Icon>{small.editType}</Icon>
          编辑类型
        </button>
      </div>

      <div className="mr-[3px] flex min-h-0 flex-1 overflow-hidden">
        <div className="min-w-0 flex-1 overflow-hidden bg-[#fcfcfc]">
          <PropertyTable />
        </div>
        <div className="flex w-4 shrink-0 flex-col items-center bg-[#f0f1f3]">
          <div className="flex h-[18px] items-center pt-0.5">
            <Chevron dir="up" />
          </div>
          <div className="h-[212px] w-full border-l border-[#f0f1f3] bg-[#cbcbcf]" />
          <div className="mt-auto pb-0.5">
            <Chevron dir="down" />
          </div>
        </div>
      </div>

      <div className="mr-1 flex h-[26px] shrink-0 items-start justify-between pt-[3px]">
        <a href="#help" className="leading-[18px] text-[#0a62c0] underline">
          属性帮助
        </a>
        <button type="button" disabled className="h-[19px] w-[73px] border border-[#d0d0d3] bg-[#ececee] leading-[17px] text-[#8b8b8e]">
          应用
        </button>
      </div>
    </aside>
  )
}

/* ---------- Drawing area ---------- */

function NavigationBar() {
  return (
    <div className="absolute top-7 right-[1px] flex h-[118px] w-9 flex-col items-center rounded-md border-2 border-[#b9bcc0] bg-[#eef3f4] text-[#8e9196]">
      <svg width="32" height="114" viewBox="0 0 32 114" fill="none" stroke="#9a9da2" aria-hidden="true">
        <circle cx="26" cy="5" r="3.500" />
        <path d="m24.500 3.500 3 3m0-3-3 3" />
        <path d="M14 20h7q3 0 3 3v7a9.500 9.500 0 1 1-10-10z" fill="#e6e8ea" />
        <circle cx="14" cy="30" r="5" fill="#fafafa" />
        <path d="m10 34-3 3" />
        <text x="16" y="42" fontSize="10" fontWeight="700" fill="#5b8fd0" stroke="none">
          2D
        </text>
        <path d="M13 49h5l-2.500 3z" fill="#8a8d92" stroke="none" />
        <path d="M3 56.500h26" stroke="#b9bcc0" />
        <path d="M8 66h8l3 3v5M8 66v13h6" />
        <path d="M16 66v3h3" />
        <circle cx="19" cy="76" r="3" fill="#fff" />
        <path d="m21 78 3 4" strokeWidth="2" />
        <path d="M13 91h5l-2.500 3z" fill="#8a8d92" stroke="none" />
        <circle cx="26" cy="108" r="3.500" />
        <path d="M24 108h4" strokeWidth="1.500" />
      </svg>
    </div>
  )
}

function DrawingArea() {
  return (
    <div className="relative min-w-0 flex-1 overflow-hidden bg-[#fdfdfd]">
      {/* Duct elbow */}
      <svg width="170" height="160" viewBox="0 0 170 160" className="absolute top-20 left-[428px]" role="img" aria-label="风管弯头">
        <path d="M8.500 12.500A136 136 0 0 1 144.500 148.500H76.500A68 68 0 0 0 8.500 80.500z" fill="#858585" stroke="#0000f0" />
        <path d="M8.500 7v79M71 148.500h80M110.500 147v1" stroke="#0000f0" fill="none" />
      </svg>

      <svg width="12" height="20" viewBox="0 0 12 20" className="absolute top-[105px] left-[840px]" aria-hidden="true">
        <path d="M.5 1v15l3.500-3 2.500 6 2.500-1-2.500-6h5z" fill="#fff" stroke="#333" />
      </svg>

      <div className="absolute top-2 right-1 flex items-center gap-[6px]">
        <button type="button" aria-label="最小化视图">
          <svg width="12" height="12" viewBox="0 0 12 12" fill="#fff" stroke={INK} aria-hidden="true">
            <path d="M.5 6.500h11v3H.5z" />
          </svg>
        </button>
        <button type="button" aria-label="还原视图">
          <svg width="12" height="12" viewBox="0 0 12 12" fill="#fff" stroke={INK} aria-hidden="true">
            <path d="M3.500.5h8v8h-8z" />
            <path d="M.5 2.500h9v9h-9zM4.500 5.500h2v3h-2z" />
          </svg>
        </button>
        <button type="button" aria-label="关闭视图">
          <svg width="12" height="12" viewBox="0 0 12 12" fill="#fff" stroke={INK} aria-hidden="true">
            <path d="M.5 1h4L6 3l1.500-2h4L8 6l3.500 5h-4L6 9l-1.500 2h-4L4 6z" />
          </svg>
        </button>
      </div>

      <NavigationBar />
    </div>
  )
}

const viewControls: [string, string][] = [
  ['detail', '详细程度'],
  ['visualStyle', '视觉样式'],
  ['sunPath', '日光路径'],
  ['shadow', '阴影'],
  ['crop', '裁剪视图'],
  ['cropShow', '显示裁剪区域'],
  ['glasses', '临时隐藏/隔离'],
  ['bulb', '显示隐藏的图元'],
  ['tempView', '临时视图属性'],
  ['constraints', '显示约束'],
]

function ViewControlBar() {
  return (
    <div className="flex h-[18px] shrink-0 items-start bg-[#eff2f2]">
      <button type="button" className="ml-5 w-[59px] text-left text-[12px] leading-4 whitespace-pre text-black">
        {'1  :  100'}
      </button>
      <div className="flex items-center gap-[5px]">
        {viewControls.map(([icon, label]) => (
          <button key={icon} type="button" aria-label={label}>
            <Icon>{small[icon]}</Icon>
          </button>
        ))}
      </div>
      <div className="ml-[7px] flex flex-1 items-center">
        <Chevron dir="left" />
        <div className="flex h-4 flex-1 justify-center">
          <div className="h-4 w-[17px] bg-[#cbcbcf]" />
        </div>
        <Chevron dir="right" />
      </div>
      <svg width="17" height="16" viewBox="0 0 17 16" fill="#c0c0c4" aria-hidden="true">
        <path d="M14 6h2v2h-2zM14 10h2v2h-2zM10 10h2v2h-2zM14 14h2v2h-2zM10 14h2v2h-2zM6 14h2v2H6z" />
      </svg>
    </div>
  )
}

/* ---------- Status bar ---------- */

function StatusSelect({ label, value, width }: { label: string; value: string; width: string }) {
  return (
    <div className={`relative flex h-5 shrink-0 items-center bg-[#fdfdfd] ${width}`}>
      <select aria-label={label} className="h-5 w-full appearance-none pr-5 pl-1 leading-5 text-[#8c8c8e]">
        <option>{value}</option>
      </select>
      <span className="pointer-events-none absolute right-[3px]">
        <Chevron dir="down" color="#aaaaae" />
      </span>
    </div>
  )
}

const selectionToggles: [string, string][] = [
  ['selLinks', '选择链接'],
  ['selUnderlay', '选择基线图元'],
  ['selPinned', '选择锁定图元'],
  ['selFace', '按面选择图元'],
  ['dragSel', '选择时拖曳图元'],
]

function StatusBar() {
  return (
    <footer className="flex h-[18px] shrink-0 items-start overflow-hidden border-t border-[#77777a] bg-[#dddde0] pt-[3px] text-[12px] text-[#222]">
      <p className="w-[367px] shrink-0 overflow-hidden leading-[18px] whitespace-nowrap">
        单击可进行选择; 按 Tab 键并单击可选择其他项目; 按 Ctrl 键并单击可将新项目添加到选择集
      </p>
      <button type="button" aria-label="工作集" className="mx-[7px]">
        <Icon>{small.worksets}</Icon>
      </button>
      <StatusSelect label="活动工作集" value="" width="w-[206px]" />
      <button type="button" className="mx-2 flex items-start gap-1 leading-4">
        <Icon>{small.pushPin}</Icon>
        <span className="pt-0.5">:0</span>
      </button>
      <button type="button" aria-label="设计选项" className="ml-3.5">
        <Icon>{small.optionList}</Icon>
      </button>
      <button type="button" aria-label="排除选项" className="mr-2 ml-[9px]">
        <Icon>{small.excludeOption}</Icon>
      </button>
      <StatusSelect label="主模型" value="主模型" width="w-[156px]" />
      <div className="ml-auto flex gap-2.5 pr-[80px]">
        {selectionToggles.map(([icon, label]) => (
          <button key={icon} type="button" aria-label={label}>
            <Icon>{small[icon]}</Icon>
          </button>
        ))}
        <button type="button" aria-label="过滤器" className="flex gap-0.5">
          <Icon>{small.filter}</Icon>
          <span className="pt-0.5 leading-4">:0</span>
        </button>
      </div>
    </footer>
  )
}

export default function App() {
  return (
    <div className="flex h-screen flex-col overflow-hidden bg-[#e6e6e8] font-['Lato','Noto_Sans_CJK_SC',sans-serif]">
      <Gradients />
      <Header />
      <Ribbon />
      <div className="h-[27px] shrink-0 bg-[#e3e3e4]" />
      <div className="flex min-h-0 flex-1">
        <PropertiesPalette />
        <main className="flex min-w-0 flex-1 flex-col border-t-2 border-l-2 border-[#6a6a6e]">
          <div className="flex min-h-0 flex-1">
            <DrawingArea />
            <div className="flex w-[13px] shrink-0 flex-col items-center bg-[#f0f2f3] pt-1 pb-1">
              <Chevron dir="up" />
              <div className="flex w-full flex-1 items-center">
                <div className="h-[17px] w-full bg-[#cbcbcf]" />
              </div>
              <Chevron dir="down" />
            </div>
          </div>
          <ViewControlBar />
        </main>
      </div>
      <StatusBar />
    </div>
  )
}
